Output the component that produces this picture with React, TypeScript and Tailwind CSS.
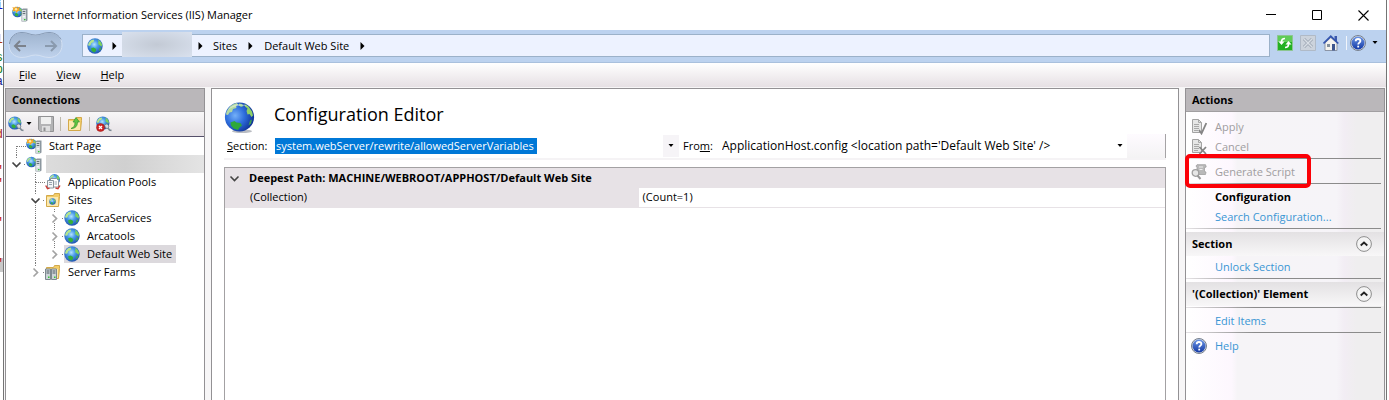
import React from "react";

type Guide = {
  up?: boolean;
  down?: boolean;
  across?: boolean;
  chevron?: "open" | "closed";
};

function Earth({ x, y, r, id }: { x: number; y: number; r: number; id: string }) {
  return (
    <g transform={`translate(${x - r} ${y - r}) scale(${r / 8})`}>
      <defs>
        <radialGradient id={id} cx="0.45" cy="0.4" r="0.65">
          <stop offset="0" stopColor="#b4e4ff" />
          <stop offset="0.4" stopColor="#4a9be8" />
          <stop offset="1" stopColor="#1a4aa8" />
        </radialGradient>
      </defs>
      <circle cx="8" cy="8" r="7.900" fill={`url(#${id})`} />
      <path d="M1.800 4.400 4 2l2.600-.6.6 1.400-1.400 1.500-1.600.5-.8 2.400-1.800.8L.9 6.800Z" fill="#b4e58c" />
      <path d="M10.800 1.200 14 3.800l1.300 3-.8 2-1.500-1.600-1.300-.5-.6-2 .6-1.300Z" fill="#7fd25c" />
      <path d="m4 10.400 2.600-.8 2.600 1.600-.2 1.800-1.900 1.700-2.500-1.500Z" fill="#35b03a" />
      <path d="m12.600 10 2-.4-1 2.600-1.500.8Z" fill="#45ad48" />
    </g>
  );
}

function GlobeIcon({ id, size = 16 }: { id: string; size?: number }) {
  return (
    <svg width={size} height={size} viewBox="0 0 16 16" aria-hidden="true" className="shrink-0">
      <Earth x={8} y={8} r={7.8} id={id} />
    </svg>
  );
}

function LargeGlobe() {
  return (
    <svg width="32" height="32" viewBox="0 0 32 32" aria-hidden="true" className="shrink-0">
      <defs>
        <radialGradient id="bigSea" cx="0.35" cy="0.45" r="0.7">
          <stop offset="0" stopColor="#74b0f8" />
          <stop offset="0.45" stopColor="#2f6fdd" />
          <stop offset="1" stopColor="#0b2a8c" />
        </radialGradient>
      </defs>
      <ellipse cx="18" cy="29.3" rx="10" ry="1.8" fill="#b9bcc2" />
      <circle cx="15.500" cy="15" r="14.600" fill="url(#bigSea)" />
      <path d="M2.500 10C4.500 5 8 2 12.500 1l2 1.500-2.500 1.500.5 2-3.500 1-1 3-2.500.5-1.500 2.500-2-.5Z" fill="#b3d9a0" />
      <path d="m15 1.500 3 .5 1.500 2-2.500 1-2-1.500Z" fill="#8fc98b" />
      <path d="m20.500 2 4 2.500 3.500 5 1 4-1.500 1.500-2-3-2 .5-1-3.500 1-2.500-2.500-2Z" fill="#8fd067" />
      <path d="m6.500 20.500 4-1.500 2 1.500 4 .5 1.500 2.500-2.500 2-1.500 2.500-4.500-1.500-2.500-3Z" fill="#2ea83a" />
      <path d="m26 18.500 2-1-1 4-2.500 2Z" fill="#3f9e52" />
      <path d="M4 8C8 1.500 18 .5 24 4.500 18 3 9 4 4 8Z" fill="#fff" opacity="0.4" />
    </svg>
  );
}

function ServerIcon({ id, star = false }: { id: string; star?: boolean }) {
  return (
    <svg width="16" height="16" viewBox="0 0 16 16" aria-hidden="true" className="shrink-0">
      <Earth x={5.500} y={6} r={5.400} id={id} />
      {star && <path d="M.3 1.200 3 1.500 4 .2l1 1.600 3-1L7 3.500l2 .8-3 .7-1.500 2-1-2L.6 5l.8-2Z" fill="#f7a823" />}
      {star && <circle cx="4" cy="3.300" r="1.200" fill="#ffe9a8" />}
      <path d="M9.500 3.500 11 2.500h4.500v12L14 15.500H9.500Z" fill="#8c979f" />
      <path d="M10 4h4v11h-4Z" fill="#d3dadd" />
      <path d="M10.700 5.500h2.600M10.700 7.500h2.600" stroke="#66727b" />
      <path d="M10.700 10h2.600v1.500h-2.600Z" fill="#f3f5f6" />
      <path d="M12 13h1.500v1.200H12Z" fill="#31c531" />
    </svg>
  );
}

function PoolsIcon() {
  return (
    <svg width="16" height="16" viewBox="0 0 16 16" aria-hidden="true" className="shrink-0">
      <Earth x={9.500} y={5.500} r={5.500} id="poolSea" />
      <path d="M5.500 4.500h6l2 2V13h-8Z" fill="#fff" stroke="#8b959d" />
      <path d="M2.500 6.500h6V14h-6Z" fill="#f3f5f7" stroke="#8b959d" />
      <path d="M4 8.500h3m-3 2h3M9.500 8h2.500m-2.500 2H12" stroke="#9aa5b1" />
      <path d="m.7 11.500 1.800 3.200 2-.6M15 11.500l-2 3.200-2.500-.7" fill="none" stroke="#ce3d36" strokeWidth="1.400" />
    </svg>
  );
}

function FolderIcon({ children }: { children?: React.ReactNode }) {
  return (
    <svg width="16" height="16" viewBox="0 0 16 16" aria-hidden="true" className="shrink-0">
      <path d="M1.500 3.500h7l1-2h5v3l-1 10h-12Z" fill="#f3cd68" stroke="#d3a94a" />
      <path d="M2 5h11v9H2Z" fill="#fce9ae" />
      {children}
    </svg>
  );
}

function SitesIcon() {
  return (
    <FolderIcon>
      <Earth x={7.500} y={9.500} r={3.300} id="sitesSea" />
    </FolderIcon>
  );
}

function FarmIcon() {
  return (
    <FolderIcon>
      <path d="M.5 5h5v10.500h-5ZM6.500 5h5v10.500h-5Z" fill="#ccd4d8" stroke="#7c888f" />
      <path d="M1.500 7h3m-3 2h3m3-2h3m-3 2h3" stroke="#4e5a62" />
      <path d="M3 12.500h1.500V14H3Zm6 0h1.500V14H9Z" fill="#35c535" />
    </FolderIcon>
  );
}

function ConnectIcon({ id, blocked = false }: { id: string; blocked?: boolean }) {
  return (
    <svg width="16" height="16" viewBox="0 0 16 16" aria-hidden="true" className="shrink-0">
      <Earth x={6.800} y={7} r={6.700} id={id} />
      <path d="m8.500 9 2.500-1.200 2 2.200-1 2.500-2.500-.5Z" fill="#d3dbe0" stroke="#6c7a84" strokeWidth="0.800" />
      <path d="m12 12 1.500 2 2 .5" fill="none" stroke="#7c8992" strokeWidth="1.500" />
      {blocked && <circle cx="4.500" cy="11.500" r="4" fill="#cf2424" stroke="#951616" strokeWidth="0.500" />}
      {blocked && <path d="m3 10 3 3m0-3-3 3" stroke="#fff" strokeWidth="1.300" />}
    </svg>
  );
}

function SaveIcon() {
  return (
    <svg width="16" height="16" viewBox="0 0 16 16" aria-hidden="true" className="shrink-0">
      <path d="M.5.500h15v15h-13l-2-2Z" fill="#b3b3b5" stroke="#919193" />
      <path d="M3 1h10v7H3Z" fill="#efefef" />
      <path d="M4 10h8v5.500H4Z" fill="#dededf" />
      <path d="M5.500 11.500h2V15h-2Z" fill="#8f8f91" />
    </svg>
  );
}

function UpFolderIcon() {
  return (
    <FolderIcon>
      <path d="M4 12.500c3-1 4-3 4-6.500H6l3-4.500L12.500 6h-2c0 4-2 6.500-6.500 6.500Z" fill="#5fc544" stroke="#36932a" strokeWidth="0.700" />
    </FolderIcon>
  );
}

function HelpIcon({ id }: { id: string }) {
  return (
    <svg width="16" height="16" viewBox="0 0 16 16" aria-hidden="true" className="shrink-0">
      <defs>
        <linearGradient id={id} x1="0" y1="0" x2="0" y2="1">
          <stop offset="0" stopColor="#6c96e6" />
          <stop offset="1" stopColor="#1238a4" />
        </linearGradient>
      </defs>
      <circle cx="8" cy="8" r="7.500" fill="#d5dae3" stroke="#77808e" />
      <circle cx="8" cy="8" r="6.500" fill={`url(#${id})`} />
      <path d="M5.700 6.300C5.700 4.700 6.700 4 8 4s2.400.7 2.400 2C10.400 7.600 8.200 7.700 8.200 9.500" fill="none" stroke="#fff" strokeWidth="1.800" />
      <path d="M7.300 10.700h1.800v1.800H7.300Z" fill="#fff" />
    </svg>
  );
}

function RefreshIcon() {
  return (
    <svg width="16" height="16" viewBox="0 0 16 16" aria-hidden="true">
      <path d="M.5.500h15v15H.5Z" fill="#22b022" stroke="#8cc690" />
      <path d="M1 1h14v6H1Z" fill="#5fcc57" />
      <path d="M8 3.500C5.500 3.500 4.500 5 4.500 7M8 12.500c2.500 0 3.500-1.500 3.500-3.500" fill="none" stroke="#fff" strokeWidth="1.700" />
      <path d="M1.500 6.500h6l-3 3.500ZM8.500 9.500h6L11.500 6Z" fill="#fff" />
    </svg>
  );
}

function StopIcon() {
  return (
    <svg width="16" height="16" viewBox="0 0 16 16" aria-hidden="true">
      <path d="M.5.500h15v15H.5Z" fill="#ccd3dc" stroke="#b0bac7" />
      <path d="m4 4 8 8m0-8-8 8" stroke="#99a3b0" strokeWidth="3" />
      <path d="m4 4 8 8m0-8-8 8" stroke="#d9dfe6" strokeWidth="1.500" />
    </svg>
  );
}

function HomeIcon() {
  return (
    <svg width="16" height="16" viewBox="0 0 16 16" aria-hidden="true">
      <path d="M11.500 1H14v5h-2.500Z" fill="#3b59ad" />
      <path d="M2 8 7.800 2.500 14 8v7.500H2Z" fill="#f4f3ef" stroke="#8c95a5" />
      <path d="M.5 8.500 7.800 1.300l7.500 7.200" fill="none" stroke="#3455ae" strokeWidth="1.700" />
      <path d="M4 9h3v3H4Z" fill="#83909c" />
      <path d="M9 9h3v6.500H9Z" fill="#3e568e" />
    </svg>
  );
}

function DocIcon({ mark }: { mark: "check" | "cross" }) {
  return (
    <svg width="16" height="16" viewBox="0 0 16 16" aria-hidden="true" className="shrink-0">
      <path d="M1.500.500h6l3 3v10h-9Z" fill="#e6e6e6" stroke="#a3a3a3" />
      <path d="M7.500.500v3h3M3 5.500h5m-5 2h5m-5 2h5m-5 2h4" fill="none" stroke="#a8a8a8" />
      {mark === "check" ? (
        <path d="m8 11 2.500 3.500L15.300 4" fill="none" stroke="#858585" strokeWidth="1.800" />
      ) : (
        <path d="m8.500 8 6.500 7m0-7-6.500 7" fill="none" stroke="#858585" strokeWidth="1.800" />
      )}
    </svg>
  );
}

function ScriptIcon() {
  return (
    <svg width="16" height="16" viewBox="0 0 16 16" aria-hidden="true" className="shrink-0">
      <path d="M6 .7h8.500l.7 2.300-1.700.7v3.800l1.500.5-.5 2.500H8L6 8.500V3.500L5 2Z" fill="#b9b9b9" stroke="#a0a0a0" strokeWidth="0.800" />
      <path d="M8 3h4M8.500 5.500h3" stroke="#eee" />
      <circle cx="4.500" cy="9" r="3.300" fill="#e6e6e6" stroke="#a0a0a0" strokeWidth="1.300" />
      <path d="m6.500 11.500 3 3.500" stroke="#999" strokeWidth="2" />
    </svg>
  );
}

function Caret() {
  return (
    <svg width="6" height="4" viewBox="0 0 6 4" aria-hidden="true" className="shrink-0">
      <path d="M.5 0h5L3 3Z" fill="#000" />
    </svg>
  );
}

function CrumbArrow() {
  return (
    <svg width="5" height="8" viewBox="0 0 5 8" aria-hidden="true" className="shrink-0">
      <path d="M.500 0 4.500 4l-4 4Z" fill="#000" />
    </svg>
  );
}

function GuideCell({ guide }: { guide: Guide }) {
  return (
    <svg width="19" height="18" viewBox="0 0 19 18" aria-hidden="true" className="shrink-0">
      <g stroke="#7d7d7d" strokeDasharray="1 1" fill="none">
        {guide.up && <path d={guide.chevron ? "M9.500 0v4" : "M9.500 0v9"} />}
        {guide.down && <path d={guide.chevron ? "M9.500 14v4" : "M9.500 9v9"} />}
        {guide.across && <path d={guide.chevron ? "M17 9.500h2" : "M10 9.500h9"} />}
      </g>
      {guide.chevron === "open" && <path d="m5.500 7.500 4 4 4-4" fill="none" stroke="#444" strokeWidth="1.700" />}
      {guide.chevron === "closed" && <path d="m7.500 5.500 4 4-4 4" fill="none" stroke="#a3a3a3" strokeWidth="1.700" />}
    </svg>
  );
}

function TreeRow({
  guides,
  icon,
  label,
  selected = false,
}: {
  guides: Guide[];
  icon: React.ReactNode;
  label?: string;
  selected?: boolean;
}) {
  return (
    <li className="flex h-[18px] items-center">
      {guides.map((g, i) => (
        <GuideCell key={i} guide={g} />
      ))}
      <span className={selected ? "flex h-[18px] items-center bg-[#dcd9dd] pr-1" : "flex h-[18px] min-w-0 flex-1 items-center"}>
        <span className="flex pr-1">{icon}</span>
        {label ? (
          <span className="whitespace-nowrap pl-[3px]">{label}</span>
        ) : (
          <span className="h-[18px] flex-1 bg-linear-to-r from-[#dcdcdc] via-[#d0d0d0] to-[#e4e4e4]" />
        )}
      </span>
    </li>
  );
}

function Rule() {
  return <hr className="mt-px mb-[3px] mr-[3px] h-px border-0 bg-linear-to-r from-[#e5e2e5] via-[#8b8b8b] via-35% to-[#8b8b8b]" />;
}

function ActionButton({ icon, label }: { icon: React.ReactNode; label: string }) {
  return (
    <button type="button" disabled className="flex h-5 w-full items-center gap-2 pl-[5px] text-[#a09da0]">
      {icon}
      {label}
    </button>
  );
}

function ActionLink({ label }: { label: string }) {
  return (
    <a href="#" className="flex h-5 items-center pl-[29px] text-[#3a96d4]">
      {label}
    </a>
  );
}

function GroupHeader({ title }: { title: string }) {
  return (
    <div className="mb-px flex h-6 items-center justify-between bg-linear-to-b from-[#e3e1e3] to-[#f8f7f8] pr-3 pl-[6px]">
      <h3 className="font-bold">{title}</h3>
      <button type="button" aria-label={`Collapse ${title}`}>
        <svg width="16" height="16" viewBox="0 0 16 16" aria-hidden="true">
          <circle cx="8" cy="8" r="7.400" fill="#f4f4f4" stroke="#8d8d8d" />
          <path d="m4.700 9.500 3.300-3 3.300 3" fill="none" stroke="#222" strokeWidth="1.800" />
        </svg>
      </button>
    </div>
  );
}

const fragments = [
  { text: "i", style: "text-[#1414c8] h-[34px]" },
  { text: "l", style: "text-[#b03a10] h-[18px]" },
  { text: "s", style: "text-[#117a11] h-[12px]" },
  { text: "p", style: "text-[#117a11] h-[12px]" },
  { text: "a", style: "text-[#14148c] h-[53px]" },
  { text: "d", style: "text-[#a51c1c] h-[36px]" },
  { text: '"', style: "text-[#c02020] h-[13px]" },
  { text: '"', style: "text-[#c02020] h-[39px]" },
  { text: '"', style: "text-[#c02020] h-[41px]" },
];

const panel = "flex min-h-0 flex-col border border-b-0 border-[#939194]";
const panelTitle = "flex h-[23px] shrink-0 items-center border-b border-[#a19fa1] bg-[#bab7ba] pl-[6px] font-bold";

export default function App() {
  return (
    <div className="flex h-screen overflow-hidden bg-white font-['Open_Sans','Noto_Sans',sans-serif] text-[11px] leading-4 text-black">
      <div className="flex w-[3px] shrink-0 flex-col items-end overflow-hidden font-['Liberation_Mono',monospace] text-[12px] leading-3">
        {fragments.map((f, i) => (
          <span key={i} className={`${f.style} shrink-0`}>
            {f.text}
          </span>
        ))}
        <span className="h-[14px] shrink-0 bg-[#c9c9c9] text-[#c02020]">"</span>
      </div>

      <div className="mr-[2px] flex min-w-0 flex-1 flex-col border-x border-[#747474]">
        <header className="flex h-[30px] shrink-0 items-center pl-2">
          <span className="-mt-[2px]">
            <ServerIcon id="titleSea" star />
          </span>
          <h1 className="pl-[5px]">Internet Information Services (IIS) Manager</h1>
          <div className="ml-auto flex">
            <button type="button" aria-label="Minimize" className="flex h-[30px] w-[46px] items-center justify-center">
              <svg width="11" height="11" viewBox="0 0 11 11"><path d="M0 4.500h10" stroke="#000" /></svg>
            </button>
            <button type="button" aria-label="Maximize" className="flex h-[30px] w-[46px] items-center justify-center">
              <svg width="11" height="11" viewBox="0 0 11 11"><path d="M.5.500h9v9h-9Z" fill="none" stroke="#000" /></svg>
            </button>
            <button type="button" aria-label="Close" className="flex h-[30px] w-[46px] items-center justify-center">
              <svg width="11" height="11" viewBox="0 0 11 11"><path d="m.5.500 10 10m0-10-10 10" stroke="#000" strokeWidth="1.100" /></svg>
            </button>
          </div>
        </header>

        <div className="flex h-[33px] shrink-0 items-start border-b border-[#a9c0dd] bg-[#bcd2ef] pt-px pl-1">
          <svg width="55" height="28" viewBox="0 0 55 28" aria-hidden="true" className="shrink-0">
            <defs>
              <linearGradient id="pill" x1="0" y1="0" x2="0" y2="1">
                <stop offset="0" stopColor="#9fb4cf" />
                <stop offset="1" stopColor="#bfd2ec" />
              </linearGradient>
            </defs>
            <path d="M14 1.500c6 0 8 2.500 13.500 2.500S35 1.500 41 1.500C49 1.500 54 7 54 14s-5 12.500-13 12.500c-6 0-8-2.500-13.500-2.500S20 26.500 14 26.500C6 26.500 1 21 1 14S6 1.500 14 1.500Z" fill="url(#pill)" stroke="#d3e0f2" />
            <path d="M1.500 13C2 5 8 1.500 14 1.500c6 0 8 2.500 13.500 2.500S35 1.500 41 1.500c6 0 10 3 12 7" fill="none" stroke="#8499b5" />
            <path d="M18 15H7m5-5-5 5 5 5" fill="none" stroke="#7c828c" strokeWidth="2" />
            <path d="M37 15h11m-5-5 5 5-5 5" fill="none" stroke="#8a9aae" strokeWidth="2" />
          </svg>
          <nav aria-label="Address" className="mt-[3px] ml-[19px] flex h-[23px] min-w-0 flex-1 items-center border border-[#9bb1c9] bg-[#edf2ff] pl-1">
            <GlobeIcon id="crumbSea" />
            <span className="flex w-[18px] justify-center pl-1"><CrumbArrow /></span>
            <span className="-mt-[3px] ml-[1px] h-[25px] w-[70px] bg-radial from-[#c3cad5] to-[#d9e1ee]" />
            <span className="flex w-[21px] justify-center pr-1"><CrumbArrow /></span>
            <a href="#">Sites</a>
            <span className="flex w-[27px] justify-center"><CrumbArrow /></span>
            <a href="#">Default Web Site</a>
            <span className="flex w-[27px] justify-center"><CrumbArrow /></span>
          </nav>
          <div className="mt-1 ml-[7px] flex items-center gap-[7px] pr-2">
            <button type="button" aria-label="Refresh"><RefreshIcon /></button>
            <button type="button" aria-label="Stop"><StopIcon /></button>
            <button type="button" aria-label="Home"><HomeIcon /></button>
            <span className="h-[14px] w-px bg-[#f1f5fb]" />
            <button type="button" aria-label="Help menu" className="flex items-center gap-[6px] -ml-1"><HelpIcon id="topHelp" /><Caret /></button>
          </div>
        </div>

        <nav aria-label="Menu" className="flex h-6 shrink-0 items-center gap-5 bg-linear-to-b from-white to-[#e6e0e4] pl-[15px]">
          <button type="button"><u>F</u>ile</button>
          <button type="button"><u>V</u>iew</button>
          <button type="button"><u>H</u>elp</button>
        </nav>

        <main className="flex min-h-0 flex-1 gap-[6px] bg-[#f7f6f7] px-px pt-px">
          <section className={`${panel} w-[200px] shrink-0 bg-white`}>
            <h2 className={panelTitle}>Connections</h2>
            <div className="flex h-[25px] shrink-0 items-center border-b border-[#55506a] bg-linear-to-b from-[#f8f7f8] to-[#e5e0e4] pl-[2px]">
              <button type="button" aria-label="Connect" className="flex items-center gap-[2px]"><ConnectIcon id="connectSea" /><Caret /></button>
              <button type="button" aria-label="Save" disabled className="ml-[6px]"><SaveIcon /></button>
              <span className="mx-[6px] h-[14px] w-px bg-[#bdb9aa]" />
              <button type="button" aria-label="Up"><UpFolderIcon /></button>
              <span className="mx-[6px] h-[14px] w-px bg-[#bdb9aa]" />
              <button type="button" aria-label="Disconnect"><ConnectIcon id="blockedSea" blocked /></button>
            </div>
            <ul className="pl-px">
              <TreeRow guides={[{ down: true, across: true }]} icon={<ServerIcon id="startSea" star />} label="Start Page" />
              <TreeRow guides={[{ up: true, across: true, chevron: "open" }]} icon={<ServerIcon id="hostSea" />} />
              <TreeRow guides={[{}, { up: true, down: true, across: true }]} icon={<PoolsIcon />} label="Application Pools" />
              <TreeRow guides={[{}, { up: true, down: true, across: true, chevron: "open" }]} icon={<SitesIcon />} label="Sites" />
              <TreeRow guides={[{}, { up: true, down: true }, { up: true, down: true, across: true, chevron: "closed" }]} icon={<GlobeIcon id="siteA" />} label="ArcaServices" />
              <TreeRow guides={[{}, { up: true, down: true }, { up: true, down: true, across: true, chevron: "closed" }]} icon={<GlobeIcon id="siteB" />} label="Arcatools" />
              <TreeRow guides={[{}, { up: true, down: true }, { up: true, across: true, chevron: "closed" }]} icon={<GlobeIcon id="siteC" />} label="Default Web Site" selected />
              <TreeRow guides={[{}, { up: true, across: true, chevron: "closed" }]} icon={<FarmIcon />} label="Server Farms" />
            </ul>
          </section>

          <section className={`${panel} min-w-0 flex-1 bg-white px-3`}>
            <div className="flex h-[45px] shrink-0 items-end">
              <LargeGlobe />
              <h2 className="pb-[6px] pl-[18px] text-[18px] leading-7">Configuration Editor</h2>
            </div>
            <div className="flex h-[26px] shrink-0 items-center border-b-2 border-[#f5f3f5] pl-[3px]">
              <label htmlFor="section" className="w-[48px] whitespace-nowrap"><u>S</u>ection:</label>
              <div className="flex min-w-0 flex-1 items-center">
                <input id="section" defaultValue="system.webServer/rewrite/allowedServerVariables" className="h-4 w-[262px] bg-[#0078d7] px-px text-white outline-none" />
              </div>
              <button type="button" aria-label="Open section list" className="flex h-[22px] w-4 items-center justify-center bg-[#f6f4f7]"><Caret /></button>
              <label htmlFor="from" className="ml-1 w-[35px] whitespace-nowrap">Fro<u>m</u>:</label>
              <div className="flex w-[405px] items-center">
                <select id="from" className="h-5 flex-1 appearance-none bg-white pl-1 text-[12px] outline-none">
                  <option>ApplicationHost.config &lt;location path='Default Web Site' /&gt;</option>
                </select>
                <Caret />
              </div>
              <span className="ml-1 h-6 w-[39px] border-r border-[#a5a3a5] bg-linear-to-b from-[#fefbff] to-[#f4f3f4]" />
            </div>
            <div className="mt-[7px] min-h-0 flex-1 border border-b-0 border-[#a3a1a3]">
              <table className="w-full table-fixed border-collapse text-left">
                <colgroup>
                  <col className="w-[44%]" />
                  <col />
                </colgroup>
                <thead>
                  <tr className="h-5 bg-[#e7e2e6]">
                    <th colSpan={2} className="p-0 font-bold">
                      <span className="flex items-center">
                        <svg width="19" height="18" viewBox="0 0 19 18" aria-hidden="true"><path d="m5.500 7.500 4 4 4-4" fill="none" stroke="#444" strokeWidth="1.600" /></svg>
                        <span className="pl-[5px]">Deepest Path: MACHINE/WEBROOT/APPHOST/Default Web Site</span>
                      </span>
                    </th>
                  </tr>
                </thead>
                <tbody>
                  <tr className="h-[19px] border-b border-[#e7e2e6]">
                    <td className="bg-[#e7e2e6] p-0 pl-[25px]">(Collection)</td>
                    <td className="p-0 pl-1">(Count=1)</td>
                  </tr>
                </tbody>
              </table>
            </div>
          </section>

          <aside className={`${panel} w-[200px] shrink-0 bg-[linear-gradient(90deg,#fff,#fdf7fe_23%,#f6f4f7_26%,#f6f4f8_76%,#f2edf4_80%,#efeeef_86%)]`}>
            <h2 className={panelTitle}>Actions</h2>
            <div className="pt-[5px]">
              <ActionButton icon={<DocIcon mark="check" />} label="Apply" />
              <ActionButton icon={<DocIcon mark="cross" />} label="Cancel" />
              <Rule />
              <div className="relative">
                <ActionButton icon={<ScriptIcon />} label="Generate Script" />
                <span className="pointer-events-none absolute -top-2 -left-px h-[34px] w-[126px] rounded-[5px] border-4 border-[#fb0007]" />
              </div>
              <Rule />
              <h3 className="flex h-5 items-center pl-[29px] font-bold">Configuration</h3>
              <ActionLink label="Search Configuration..." />
              <Rule />
              <GroupHeader title="Section" />
              <ActionLink label="Unlock Section" />
              <Rule />
              <GroupHeader title="'(Collection)' Element" />
              <Rule />
              <ActionLink label="Edit Items" />
              <Rule />
              <a href="#" className="flex h-5 items-center gap-2 pl-[5px] text-[#3a96d4]">
                <HelpIcon id="sideHelp" />
                Help
              </a>
            </div>
          </aside>
        </main>
      </div>
    </div>
  );
}
